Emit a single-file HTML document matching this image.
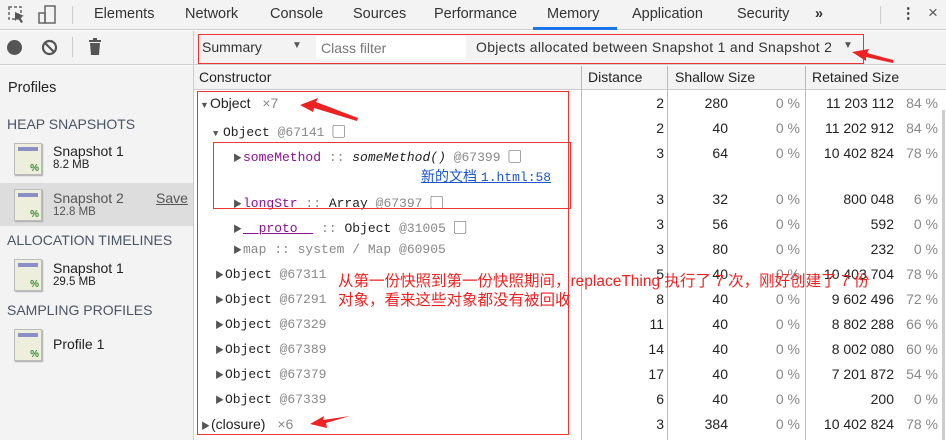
<!DOCTYPE html>
<html><head><meta charset="utf-8"><style>
*{margin:0;padding:0;box-sizing:border-box}
body{width:946px;height:440px;overflow:hidden;background:#fff;font-family:"Liberation Sans","Noto Sans CJK SC",sans-serif;font-size:14px;color:#222;position:relative}
.a{position:absolute;white-space:nowrap}
.m{font-family:"Liberation Mono","Noto Sans CJK SC",monospace;font-size:13px}
.g{color:#888}
.p{color:#881391}
.t{font-size:9px;color:#555;display:inline-block;width:10px}
.tab{position:absolute;top:6px;font-size:14.5px;color:#333}
.sec{position:absolute;left:7px;font-size:14px;color:#4a5566}
.icon{position:absolute;width:28px;height:32px;background:#eeeedc;border:1px solid #bbb;box-shadow:1px 1px 1px #aaa}
.icon:before{content:"";position:absolute;left:3px;top:3px;width:20px;height:4px;background:#8a8fc8}
.icon:after{content:"%";position:absolute;right:2px;bottom:0;font-size:10px;color:#3a8a3a;font-weight:bold}
.n{position:absolute;text-align:right;white-space:nowrap}
</style></head><body>
<div class="a" style="left:0;top:0;width:946px;height:30px;background:#f3f3f3;border-bottom:1px solid #ccc"></div>
<svg class="a" style="left:8px;top:6px" width="20" height="18"><rect x="1" y="1" width="12" height="12" fill="none" stroke="#666" stroke-width="1.5" stroke-dasharray="3 2"/><path d="M7 6 L16 10 L12 11 L15 16 L13 17 L10 12 L7 15 Z" fill="#555"/></svg>
<svg class="a" style="left:38px;top:5px" width="20" height="20"><rect x="7" y="1" width="10" height="17" fill="none" stroke="#666" stroke-width="1.5"/><rect x="1" y="8" width="6" height="10" fill="none" stroke="#666" stroke-width="1.5"/></svg>
<div class="a" style="left:72px;top:6px;width:1px;height:18px;background:#ccc"></div>
<div class="tab" style="left:94px">Elements</div>
<div class="tab" style="left:185px">Network</div>
<div class="tab" style="left:270px">Console</div>
<div class="tab" style="left:353px">Sources</div>
<div class="tab" style="left:434px">Performance</div>
<div class="tab" style="left:547px">Memory</div>
<div class="a" style="left:533px;top:27px;width:84px;height:3px;background:#1a73e8"></div>
<div class="tab" style="left:632px">Application</div>
<div class="tab" style="left:737px">Security</div>
<div class="tab" style="left:815px;font-weight:bold">»</div>
<div class="a" style="left:880px;top:6px;width:1px;height:18px;background:#ccc"></div>
<div class="tab" style="left:901px;font-weight:bold">⋮</div>
<div class="tab" style="left:928px;font-size:17px;top:3px;color:#555">×</div>
<div class="a" style="left:0;top:31px;width:946px;height:34px;background:#f3f3f3;border-bottom:1px solid #ccc"></div>
<div class="a" style="left:7px;top:40px;width:15px;height:15px;border-radius:50%;background:#555"></div>
<svg class="a" style="left:41px;top:39px" width="17" height="17"><circle cx="8.5" cy="8.5" r="6.5" fill="none" stroke="#555" stroke-width="2.2"/><line x1="4" y1="4" x2="13" y2="13" stroke="#555" stroke-width="2.2"/></svg>
<div class="a" style="left:72px;top:37px;width:1px;height:20px;background:#ccc"></div>
<svg class="a" style="left:88px;top:38px" width="14" height="18"><rect x="1" y="2" width="12" height="2" fill="#555"/><rect x="5" y="0" width="4" height="2" fill="#555"/><path d="M2 5 H12 L11 17 H3 Z" fill="#555"/></svg>
<div class="a" style="left:193px;top:31px;width:1px;height:409px;background:#ccc"></div>
<div class="a" style="left:202px;top:39px;color:#333">Summary</div>
<div class="a" style="left:292px;top:40px;font-size:10px;color:#555">▼</div>
<div class="a" style="left:316px;top:36px;width:150px;height:23px;background:#fff"></div>
<div class="a" style="left:321px;top:40px;color:#777">Class filter</div>
<div class="a" style="left:476px;top:39px;color:#333;letter-spacing:0.3px">Objects allocated between Snapshot 1 and Snapshot 2</div>
<div class="a" style="left:843px;top:40px;font-size:10px;color:#555">▼</div>
<div class="a" style="left:198px;top:34px;width:666px;height:30px;border:1px solid #e33"></div>
<div class="a" style="left:0;top:66px;width:193px;height:374px;background:#f3f3f3"></div>
<div class="a" style="left:8px;top:80px;font-size:14.5px">Profiles</div>
<div class="sec" style="top:116px">HEAP SNAPSHOTS</div>
<div class="icon" style="left:14px;top:143px"></div>
<div class="a" style="left:53px;top:143px">Snapshot 1</div>
<div class="a" style="left:53px;top:159px;font-size:11.5px">8.2 MB</div>
<div class="a" style="left:0;top:183px;width:193px;height:43px;background:#ddd"></div>
<div class="icon" style="left:14px;top:189px"></div>
<div class="a" style="left:53px;top:190px;color:#555">Snapshot 2</div>
<div class="a" style="left:53px;top:206px;font-size:11.5px;color:#555">12.8 MB</div>
<div class="a" style="left:156px;top:190px;color:#555;text-decoration:underline">Save</div>
<div class="sec" style="top:232px">ALLOCATION TIMELINES</div>
<div class="icon" style="left:14px;top:259px"></div>
<div class="a" style="left:53px;top:260px">Snapshot 1</div>
<div class="a" style="left:53px;top:276px;font-size:11.5px">29.5 MB</div>
<div class="sec" style="top:302px">SAMPLING PROFILES</div>
<div class="icon" style="left:14px;top:329px"></div>
<div class="a" style="left:53px;top:336px">Profile 1</div>
<div class="a" style="left:194px;top:66px;width:752px;height:24px;background:#f3f3f3;border-bottom:1px solid #ccc"></div>
<div class="a" style="left:581px;top:66px;width:1px;height:374px;background:#bbb"></div>
<div class="a" style="left:667px;top:66px;width:1px;height:374px;background:#bbb"></div>
<div class="a" style="left:805px;top:66px;width:1px;height:374px;background:#bbb"></div>
<div class="a" style="left:199px;top:69px">Constructor</div>
<div class="a" style="left:588px;top:69px">Distance</div>
<div class="a" style="left:675px;top:69px">Shallow Size</div>
<div class="a" style="left:812px;top:69px">Retained Size</div>
<div class="a" style="left:942px;top:110px;width:3px;height:330px;background:#ccc"></div>

<div class="a" style="left:200px;top:95px"><span class="t">▼</span>Object <span class="g" style="margin-left:8px">×7</span></div>
<div class="a m" style="left:213px;top:121px"><span class="t">▼</span>Object <span class="g">@67141</span> ▢</div>
<div class="a m" style="left:233px;top:146px"><span class="t">▶</span><span class="p">someMethod</span> <span class="g">::</span> <i>someMethod()</i> <span class="g">@67399</span> ▢</div>
<div class="a" style="left:421px;top:166px;color:#1a55cc;text-decoration:underline">新的文档 <span class="m">1.html:58</span></div>
<div class="a m" style="left:233px;top:192px"><span class="t">▶</span><span class="p">longStr</span> <span class="g">::</span> Array <span class="g">@67397</span> ▢</div>
<div class="a m" style="left:233px;top:217px"><span class="t">▶</span><span class="p" style="text-decoration:underline">__proto__</span> <span class="g">::</span> Object <span class="g">@31005</span> ▢</div>
<div class="a m g" style="left:233px;top:242px"><span class="t">▶</span>map :: system / Map @60905</div>
<div class="a m" style="left:215px;top:267px"><span class="t">▶</span>Object <span class="g">@67311</span></div>
<div class="a m" style="left:215px;top:292px"><span class="t">▶</span>Object <span class="g">@67291</span></div>
<div class="a m" style="left:215px;top:317px"><span class="t">▶</span>Object <span class="g">@67329</span></div>
<div class="a m" style="left:215px;top:342px"><span class="t">▶</span>Object <span class="g">@67389</span></div>
<div class="a m" style="left:215px;top:367px"><span class="t">▶</span>Object <span class="g">@67379</span></div>
<div class="a m" style="left:215px;top:392px"><span class="t">▶</span>Object <span class="g">@67339</span></div>
<div class="a" style="left:201px;top:416px"><span class="t">▶</span>(closure) <span class="g" style="margin-left:8px">×6</span></div>

<div class="n" style="left:600px;top:95px;width:64px">2</div><div class="n" style="left:670px;top:95px;width:58px">280</div><div class="n g" style="left:740px;top:95px;width:60px">0 %</div><div class="n" style="left:808px;top:95px;width:86px">11 203 112</div><div class="n g" style="left:895px;top:95px;width:43px">84 %</div>
<div class="n" style="left:600px;top:120px;width:64px">2</div><div class="n" style="left:670px;top:120px;width:58px">40</div><div class="n g" style="left:740px;top:120px;width:60px">0 %</div><div class="n" style="left:808px;top:120px;width:86px">11 202 912</div><div class="n g" style="left:895px;top:120px;width:43px">84 %</div>
<div class="n" style="left:600px;top:145px;width:64px">3</div><div class="n" style="left:670px;top:145px;width:58px">64</div><div class="n g" style="left:740px;top:145px;width:60px">0 %</div><div class="n" style="left:808px;top:145px;width:86px">10 402 824</div><div class="n g" style="left:895px;top:145px;width:43px">78 %</div>
<div class="n" style="left:600px;top:191px;width:64px">3</div><div class="n" style="left:670px;top:191px;width:58px">32</div><div class="n g" style="left:740px;top:191px;width:60px">0 %</div><div class="n" style="left:808px;top:191px;width:86px">800 048</div><div class="n g" style="left:895px;top:191px;width:43px">6 %</div>
<div class="n" style="left:600px;top:216px;width:64px">3</div><div class="n" style="left:670px;top:216px;width:58px">56</div><div class="n g" style="left:740px;top:216px;width:60px">0 %</div><div class="n" style="left:808px;top:216px;width:86px">592</div><div class="n g" style="left:895px;top:216px;width:43px">0 %</div>
<div class="n" style="left:600px;top:241px;width:64px">3</div><div class="n" style="left:670px;top:241px;width:58px">80</div><div class="n g" style="left:740px;top:241px;width:60px">0 %</div><div class="n" style="left:808px;top:241px;width:86px">232</div><div class="n g" style="left:895px;top:241px;width:43px">0 %</div>
<div class="n" style="left:600px;top:266px;width:64px">5</div><div class="n" style="left:670px;top:266px;width:58px">40</div><div class="n g" style="left:740px;top:266px;width:60px">0 %</div><div class="n" style="left:808px;top:266px;width:86px">10 403 704</div><div class="n g" style="left:895px;top:266px;width:43px">78 %</div>
<div class="n" style="left:600px;top:291px;width:64px">8</div><div class="n" style="left:670px;top:291px;width:58px">40</div><div class="n g" style="left:740px;top:291px;width:60px">0 %</div><div class="n" style="left:808px;top:291px;width:86px">9 602 496</div><div class="n g" style="left:895px;top:291px;width:43px">72 %</div>
<div class="n" style="left:600px;top:316px;width:64px">11</div><div class="n" style="left:670px;top:316px;width:58px">40</div><div class="n g" style="left:740px;top:316px;width:60px">0 %</div><div class="n" style="left:808px;top:316px;width:86px">8 802 288</div><div class="n g" style="left:895px;top:316px;width:43px">66 %</div>
<div class="n" style="left:600px;top:341px;width:64px">14</div><div class="n" style="left:670px;top:341px;width:58px">40</div><div class="n g" style="left:740px;top:341px;width:60px">0 %</div><div class="n" style="left:808px;top:341px;width:86px">8 002 080</div><div class="n g" style="left:895px;top:341px;width:43px">60 %</div>
<div class="n" style="left:600px;top:366px;width:64px">17</div><div class="n" style="left:670px;top:366px;width:58px">40</div><div class="n g" style="left:740px;top:366px;width:60px">0 %</div><div class="n" style="left:808px;top:366px;width:86px">7 201 872</div><div class="n g" style="left:895px;top:366px;width:43px">54 %</div>
<div class="n" style="left:600px;top:391px;width:64px">6</div><div class="n" style="left:670px;top:391px;width:58px">40</div><div class="n g" style="left:740px;top:391px;width:60px">0 %</div><div class="n" style="left:808px;top:391px;width:86px">200</div><div class="n g" style="left:895px;top:391px;width:43px">0 %</div>
<div class="n" style="left:600px;top:416px;width:64px">3</div><div class="n" style="left:670px;top:416px;width:58px">384</div><div class="n g" style="left:740px;top:416px;width:60px">0 %</div><div class="n" style="left:808px;top:416px;width:86px">10 402 824</div><div class="n g" style="left:895px;top:416px;width:43px">78 %</div>

<div class="a" style="left:338px;top:272px;color:#e22;font-size:15.5px;line-height:19px">从第一份快照到第一份快照期间，replaceThing 执行了 7 次，刚好创建了 7 份<br>对象，看来这些对象都没有被回收</div>
<div class="a" style="left:197px;top:91px;width:372px;height:344px;border:1px solid #e33"></div>
<div class="a" style="left:213px;top:142px;width:358px;height:67px;border:1px solid #e33"></div>
<svg class="a" style="left:0;top:0" width="946" height="440">
<path d="M300 105 L318 98 L316 102 L358 118 L357 121 L314 108 L313 112 Z" fill="#e22"/>
<path d="M852 52 L866 61 L866 57 L893 63 L893 60 L867 53 L869 49 Z" fill="#e22"/>
<path d="M310 424 L324 416 L323 420 L350 416 L326 423 L327 428 Z" fill="#e22"/>
</svg>
</body></html>
